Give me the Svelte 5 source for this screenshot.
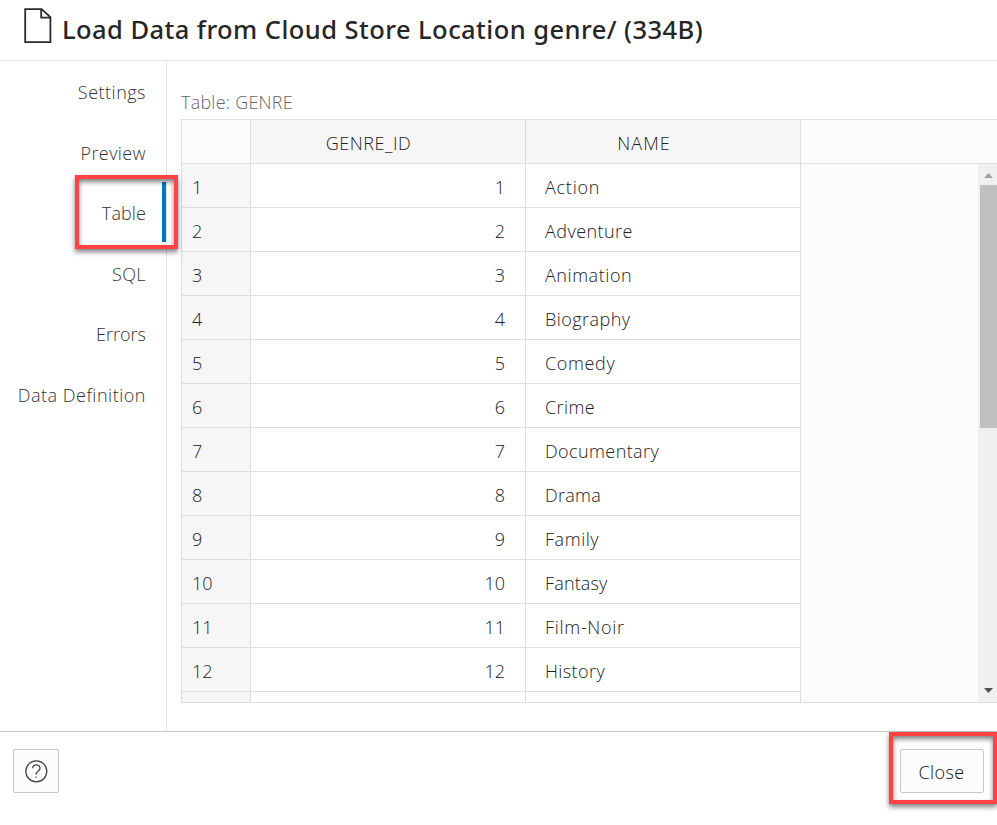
<script>
  // Each label carries its own tracking, in pixels.
  const tabs = [
    ['Settings', 0.5],
    ['Preview', 0.4],
    ['Table', 0.1],
    ['SQL', 0.4],
    ['Errors', 0],
    ['Data Definition', 0.52]
  ];
  const genres = [
    ['Action', 0.75],
    ['Adventure', 0.45],
    ['Animation', 0.55],
    ['Biography', 0.45],
    ['Comedy', 0.65],
    ['Crime', 0.4],
    ['Documentary', 0.4],
    ['Drama', 0.25],
    ['Family', 0.55],
    ['Fantasy', 0.15],
    ['Film-Noir', 0.7],
    ['History', 0.4],
    ['', 0]
  ];
  let active = $state('Table');
</script>

<div class="dialog">
  <header>
    <svg class="file" width="28" height="36" viewBox="0 0 28 36" fill="none" stroke="#2b2b2b" stroke-width="1.8">
      <path d="M1.2 1.2H17.6L26.4 9.2V34.2H1.2Z" />
      <path d="M17.2 1.2V9.7H26.4" />
    </svg>
    <h1>Load Data from Cloud Store Location genre/ (334B)</h1>
  </header>

  <div class="body">
    <nav>
      {#each tabs as [tab, tracking]}
        <button class="tab" class:active={tab === active} style:letter-spacing="{tracking}px" onclick={() => (active = tab)}>{tab}</button>
      {/each}
      <div class="mark mark-tab"></div>
    </nav>
    <main>
      <div class="caption">Table: GENRE</div>
      <div class="grid">
        <div class="row head">
          <div class="num"></div>
          <div class="id">GENRE_ID</div>
          <div class="name">NAME</div>
          <div class="rest"></div>
        </div>
        <div class="scroller">
          <div class="rows">
            {#each genres as [genre, tracking], i}
              <div class="row">
                <div class="num">{genre ? i + 1 : ''}</div>
                <div class="id">{genre ? i + 1 : ''}</div>
                <div class="name" style:letter-spacing="{tracking}px">{genre}</div>
              </div>
            {/each}
          </div>
          <div class="scrollbar">
            <svg width="19" height="21"><path d="M6 14H15L10.5 9Z" fill="#a3a3a3" /></svg>
            <div class="thumb"></div>
            <svg class="down" width="19" height="21"><path d="M6 7H15L10.5 12Z" fill="#505050" /></svg>
          </div>
        </div>
      </div>
    </main>
  </div>

  <footer>
    <button class="btn help" aria-label="Help">
      <svg width="24" height="24" viewBox="0 0 24 24" fill="none" stroke="#454545" stroke-width="1.3">
        <circle cx="12.3" cy="12.3" r="10.5" />
        <path d="M8.7 9.3C8.7 4.8 16 4.8 16 9.2C16 12 12 12 12 15.6" />
        <path d="M12 17.4V18.8" />
      </svg>
    </button>
    <button class="btn close">Close</button>
    <div class="mark mark-close"></div>
  </footer>
</div>

<style>
  :global(body) {
    margin: 0;
    overflow: hidden;
    background: #fff;
  }
  .dialog {
    width: 997px;
    height: 825px;
    display: flex;
    flex-direction: column;
    overflow: hidden;
    font: 300 18px/24px 'Open Sans', 'Noto Sans', sans-serif;
    color: #222;
  }
  .dialog * {
    box-sizing: border-box;
  }
  button {
    font: inherit;
    color: inherit;
    padding: 0;
    margin: 0;
  }
  header {
    height: 61px;
    flex: none;
    display: flex;
    border-bottom: 1px solid #e4e4e4;
    padding: 8px 0 0 24px;
  }
  h1 {
    margin: 3px 0 0 10px;
    font: 500 25.5px/36px 'Noto Sans', 'Open Sans', sans-serif;
    letter-spacing: 0.44px;
    white-space: nowrap;
    color: #262626;
  }
  .body {
    height: 670px;
    flex: none;
    display: flex;
  }
  nav {
    width: 167px;
    flex: none;
    position: relative;
    border-right: 1px solid #e4e4e4;
  }
  .tab {
    display: block;
    width: 100%;
    height: 60.5px;
    border: 0;
    background: none;
    padding: 2px 20px 0 0;
    text-align: right;
    white-space: nowrap;
    color: #333;
  }
  .tab.active {
    height: 60px;
    margin-bottom: 0.5px;
    border-right: 4px solid #0079c1;
    padding-right: 16px;
  }
  .mark {
    position: absolute;
    border: 4px solid #ff4343;
    box-shadow: 0 3px 5px rgba(0, 0, 0, 0.5), inset 0 3px 5px rgba(0, 0, 0, 0.5);
    pointer-events: none;
    z-index: 2;
  }
  .mark-tab {
    left: 75px;
    top: 114px;
    width: 103px;
    height: 74px;
  }
  main {
    flex: 1;
    min-width: 0;
    padding: 29px 0 0 14px;
  }
  .caption {
    height: 29px;
    letter-spacing: 0.22px;
    color: #666;
  }
  .grid {
    height: 584px;
    border: 1px solid #dedede;
    border-right: 0;
    background: #fcfcfc;
    display: flex;
    flex-direction: column;
  }
  .row {
    display: flex;
    height: 44px;
    flex: none;
    line-height: 43px;
  }
  .row > div {
    border-right: 1px solid #dedede;
    border-bottom: 1px solid #dedede;
    padding-top: 2px;
    background: #fff;
    flex: none;
  }
  .row .num {
    width: 69px;
    padding-left: 10px;
    background: #f6f6f6;
  }
  .row .id {
    width: 275px;
    padding-right: 20px;
    text-align: right;
  }
  .row .name {
    width: 275px;
    padding-left: 19px;
  }
  .head .num,
  .row .rest {
    background: #fcfcfc;
  }
  .row .rest {
    flex: 1;
    border-right: 0;
  }
  .head .id,
  .head .name {
    background: #f6f6f6;
    text-align: center;
    padding-left: 0;
    padding-right: 39px;
    letter-spacing: 0.55px;
  }
  .head .name {
    letter-spacing: 1px;
    padding-right: 38px;
  }
  .scroller {
    flex: 1;
    min-height: 0;
    display: flex;
    justify-content: space-between;
    overflow: hidden;
  }
  .scrollbar {
    width: 19px;
    background: #f0f0f0;
    display: flex;
    flex-direction: column;
  }
  .scrollbar svg {
    flex: none;
    display: block;
  }
  .thumb {
    height: 243px;
    margin-left: 2px;
    background: #c0c0c0;
  }
  .down {
    margin-top: auto;
  }
  footer {
    flex: 1;
    position: relative;
    border-top: 1px solid #c8c8c8;
    display: flex;
    justify-content: space-between;
    align-items: flex-start;
    padding: 17px 13px 0;
  }
  .btn {
    height: 44px;
    border: 1px solid #c8c8c8;
    border-radius: 2px;
    background: #fcfcfc;
    display: flex;
    align-items: center;
    justify-content: center;
  }
  .help {
    width: 46px;
  }
  .close {
    width: 84px;
    padding: 2px 1px 0 0;
    letter-spacing: 0.4px;
    color: #111;
  }
  .mark-close {
    right: 0;
    top: 0;
    width: 108px;
    height: 72px;
  }
</style>
